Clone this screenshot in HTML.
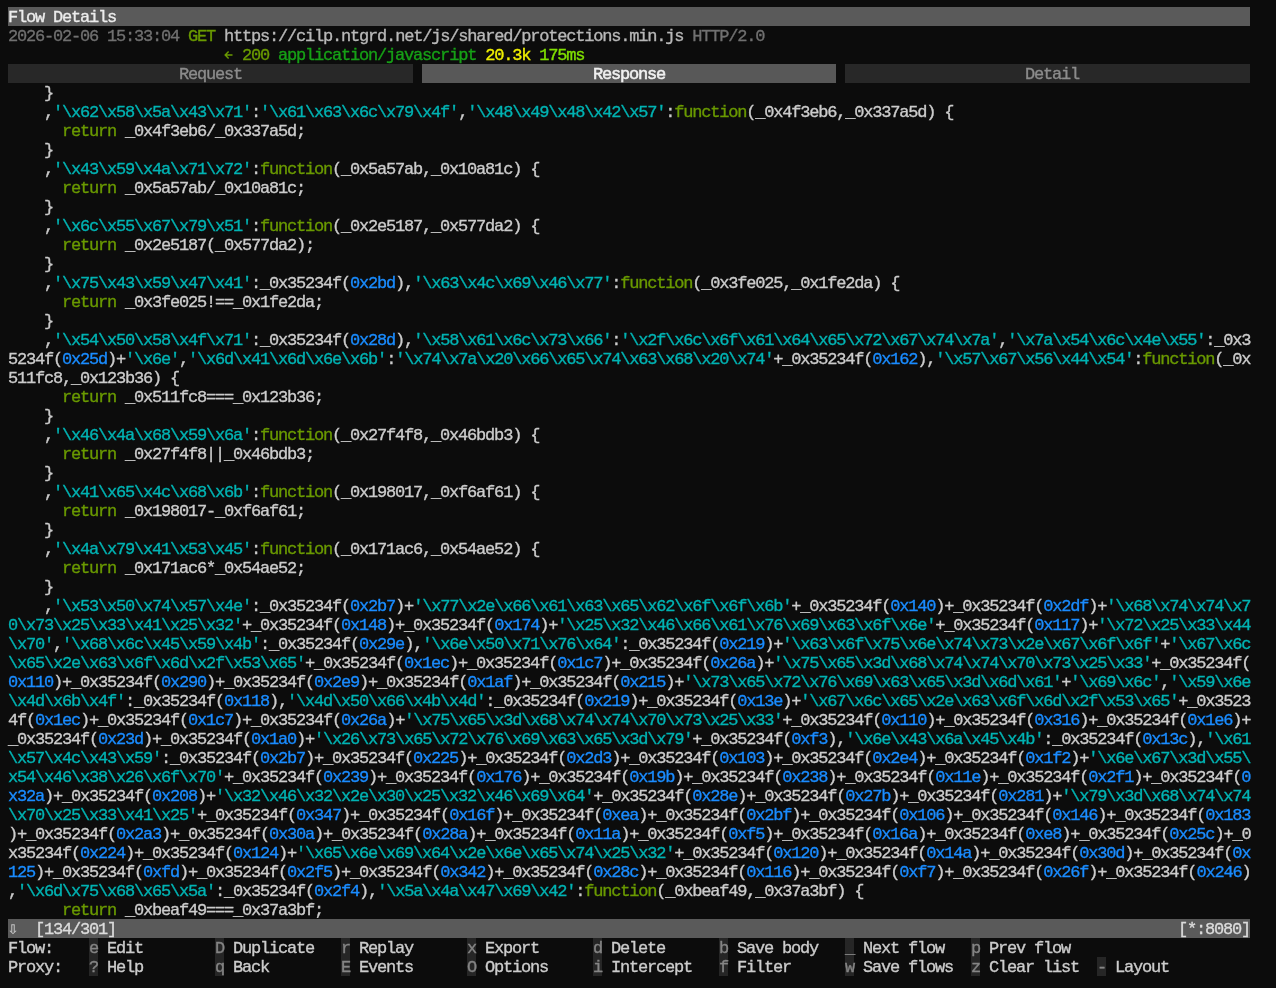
<!DOCTYPE html>
<html><head><meta charset="utf-8"><style>
html,body{margin:0;padding:0;background:#0c0c0c;width:1276px;height:988px;overflow:hidden;}
body{position:relative;}
.r{position:absolute;left:8px;height:19px;line-height:21px;white-space:pre;font-family:"Liberation Mono",monospace;font-size:17px;letter-spacing:-1.2px;color:#cccccc;-webkit-text-stroke:0.35px currentColor;will-change:transform;}
i{font-style:normal;}
.c{color:#00b3b3}.b{color:#1a8cff}.o{color:#6a9a00}
.bar{position:absolute;height:19px;background:#5a5a5a;}
.hd{color:#ececec}
.ts{color:#707070}.url{color:#b8b8b8}.g{color:#16a016}.y{color:#f0f000}.lg{color:#80e000}
.tabI{position:absolute;height:19px;background:#282828}
.tabA{position:absolute;height:19px;background:#585858}
.tI{color:#8c8c8c}.tA{color:#f0f0f0;-webkit-text-stroke:0.55px #f0f0f0}
.sa{color:#bdbdbd}.hd2{color:#dcdcdc}
.kb{position:absolute;width:9px;height:19px;background:#262626}
.k{color:#858585}
</style></head><body>
<div class="bar" style="top:7px;left:8px;width:1242px"></div>
<div class="r" style="top:7px"><i class="hd">Flow Details</i></div>
<div class="r" style="top:26px"><i class="ts">2026-02-06 15:33:04</i> <i class="o">GET</i> <i class="url">https://cilp.ntgrd.net/js/shared/protections.min.js</i> <i class="ts">HTTP/2.0</i></div>
<div class="r" style="top:45px">                         <svg style="position:absolute;left:216px;top:0px" width="9" height="19" viewBox="0 0 9 19"><path d="M8.5 10H1.5M4.6 6.6L1.2 10L4.6 13.4" fill="none" stroke="#6a9a00" stroke-width="1.45"/></svg> <i class="o">200</i> <i class="g">application/javascript</i> <i class="y">20.3k</i> <i class="lg">175ms</i></div>
<div class="tabI" style="top:64px;left:8px;width:405px"></div>
<div class="r tI" style="top:64px;left:179px">Request</div>
<div class="tabA" style="top:64px;left:422px;width:414px"></div>
<div class="r tA" style="top:64px;left:593px">Response</div>
<div class="tabI" style="top:64px;left:845px;width:405px"></div>
<div class="r tI" style="top:64px;left:1025px">Detail</div>
<div class="r" style="top:83px">    }</div>
<div class="r" style="top:102px">    ,<i class="c">&#x27;\x62\x58\x5a\x43\x71&#x27;</i>:<i class="c">&#x27;\x61\x63\x6c\x79\x4f&#x27;</i>,<i class="c">&#x27;\x48\x49\x48\x42\x57&#x27;</i>:<i class="o">function</i>(_0x4f3eb6,_0x337a5d) {</div>
<div class="r" style="top:121px">      <i class="o">return</i> _0x4f3eb6/_0x337a5d;</div>
<div class="r" style="top:140px">    }</div>
<div class="r" style="top:159px">    ,<i class="c">&#x27;\x43\x59\x4a\x71\x72&#x27;</i>:<i class="o">function</i>(_0x5a57ab,_0x10a81c) {</div>
<div class="r" style="top:178px">      <i class="o">return</i> _0x5a57ab/_0x10a81c;</div>
<div class="r" style="top:197px">    }</div>
<div class="r" style="top:216px">    ,<i class="c">&#x27;\x6c\x55\x67\x79\x51&#x27;</i>:<i class="o">function</i>(_0x2e5187,_0x577da2) {</div>
<div class="r" style="top:235px">      <i class="o">return</i> _0x2e5187(_0x577da2);</div>
<div class="r" style="top:254px">    }</div>
<div class="r" style="top:273px">    ,<i class="c">&#x27;\x75\x43\x59\x47\x41&#x27;</i>:_0x35234f(<i class="b">0x2bd</i>),<i class="c">&#x27;\x63\x4c\x69\x46\x77&#x27;</i>:<i class="o">function</i>(_0x3fe025,_0x1fe2da) {</div>
<div class="r" style="top:292px">      <i class="o">return</i> _0x3fe025!==_0x1fe2da;</div>
<div class="r" style="top:311px">    }</div>
<div class="r" style="top:330px">    ,<i class="c">&#x27;\x54\x50\x58\x4f\x71&#x27;</i>:_0x35234f(<i class="b">0x28d</i>),<i class="c">&#x27;\x58\x61\x6c\x73\x66&#x27;</i>:<i class="c">&#x27;\x2f\x6c\x6f\x61\x64\x65\x72\x67\x74\x7a&#x27;</i>,<i class="c">&#x27;\x7a\x54\x6c\x4e\x55&#x27;</i>:_0x3</div>
<div class="r" style="top:349px">5234f(<i class="b">0x25d</i>)+<i class="c">&#x27;\x6e&#x27;</i>,<i class="c">&#x27;\x6d\x41\x6d\x6e\x6b&#x27;</i>:<i class="c">&#x27;\x74\x7a\x20\x66\x65\x74\x63\x68\x20\x74&#x27;</i>+_0x35234f(<i class="b">0x162</i>),<i class="c">&#x27;\x57\x67\x56\x44\x54&#x27;</i>:<i class="o">function</i>(_0x</div>
<div class="r" style="top:368px">511fc8,_0x123b36) {</div>
<div class="r" style="top:387px">      <i class="o">return</i> _0x511fc8===_0x123b36;</div>
<div class="r" style="top:406px">    }</div>
<div class="r" style="top:425px">    ,<i class="c">&#x27;\x46\x4a\x68\x59\x6a&#x27;</i>:<i class="o">function</i>(_0x27f4f8,_0x46bdb3) {</div>
<div class="r" style="top:444px">      <i class="o">return</i> _0x27f4f8||_0x46bdb3;</div>
<div class="r" style="top:463px">    }</div>
<div class="r" style="top:482px">    ,<i class="c">&#x27;\x41\x65\x4c\x68\x6b&#x27;</i>:<i class="o">function</i>(_0x198017,_0xf6af61) {</div>
<div class="r" style="top:501px">      <i class="o">return</i> _0x198017-_0xf6af61;</div>
<div class="r" style="top:520px">    }</div>
<div class="r" style="top:539px">    ,<i class="c">&#x27;\x4a\x79\x41\x53\x45&#x27;</i>:<i class="o">function</i>(_0x171ac6,_0x54ae52) {</div>
<div class="r" style="top:558px">      <i class="o">return</i> _0x171ac6*_0x54ae52;</div>
<div class="r" style="top:577px">    }</div>
<div class="r" style="top:596px">    ,<i class="c">&#x27;\x53\x50\x74\x57\x4e&#x27;</i>:_0x35234f(<i class="b">0x2b7</i>)+<i class="c">&#x27;\x77\x2e\x66\x61\x63\x65\x62\x6f\x6f\x6b&#x27;</i>+_0x35234f(<i class="b">0x140</i>)+_0x35234f(<i class="b">0x2df</i>)+<i class="c">&#x27;\x68\x74\x74\x7</i></div>
<div class="r" style="top:615px"><i class="c">0\x73\x25\x33\x41\x25\x32&#x27;</i>+_0x35234f(<i class="b">0x148</i>)+_0x35234f(<i class="b">0x174</i>)+<i class="c">&#x27;\x25\x32\x46\x66\x61\x76\x69\x63\x6f\x6e&#x27;</i>+_0x35234f(<i class="b">0x117</i>)+<i class="c">&#x27;\x72\x25\x33\x44</i></div>
<div class="r" style="top:634px"><i class="c">\x70&#x27;</i>,<i class="c">&#x27;\x68\x6c\x45\x59\x4b&#x27;</i>:_0x35234f(<i class="b">0x29e</i>),<i class="c">&#x27;\x6e\x50\x71\x76\x64&#x27;</i>:_0x35234f(<i class="b">0x219</i>)+<i class="c">&#x27;\x63\x6f\x75\x6e\x74\x73\x2e\x67\x6f\x6f&#x27;</i>+<i class="c">&#x27;\x67\x6c</i></div>
<div class="r" style="top:653px"><i class="c">\x65\x2e\x63\x6f\x6d\x2f\x53\x65&#x27;</i>+_0x35234f(<i class="b">0x1ec</i>)+_0x35234f(<i class="b">0x1c7</i>)+_0x35234f(<i class="b">0x26a</i>)+<i class="c">&#x27;\x75\x65\x3d\x68\x74\x74\x70\x73\x25\x33&#x27;</i>+_0x35234f(</div>
<div class="r" style="top:672px"><i class="b">0x110</i>)+_0x35234f(<i class="b">0x290</i>)+_0x35234f(<i class="b">0x2e9</i>)+_0x35234f(<i class="b">0x1af</i>)+_0x35234f(<i class="b">0x215</i>)+<i class="c">&#x27;\x73\x65\x72\x76\x69\x63\x65\x3d\x6d\x61&#x27;</i>+<i class="c">&#x27;\x69\x6c&#x27;</i>,<i class="c">&#x27;\x59\x6e</i></div>
<div class="r" style="top:691px"><i class="c">\x4d\x6b\x4f&#x27;</i>:_0x35234f(<i class="b">0x118</i>),<i class="c">&#x27;\x4d\x50\x66\x4b\x4d&#x27;</i>:_0x35234f(<i class="b">0x219</i>)+_0x35234f(<i class="b">0x13e</i>)+<i class="c">&#x27;\x67\x6c\x65\x2e\x63\x6f\x6d\x2f\x53\x65&#x27;</i>+_0x3523</div>
<div class="r" style="top:710px">4f(<i class="b">0x1ec</i>)+_0x35234f(<i class="b">0x1c7</i>)+_0x35234f(<i class="b">0x26a</i>)+<i class="c">&#x27;\x75\x65\x3d\x68\x74\x74\x70\x73\x25\x33&#x27;</i>+_0x35234f(<i class="b">0x110</i>)+_0x35234f(<i class="b">0x316</i>)+_0x35234f(<i class="b">0x1e6</i>)+</div>
<div class="r" style="top:729px">_0x35234f(<i class="b">0x23d</i>)+_0x35234f(<i class="b">0x1a0</i>)+<i class="c">&#x27;\x26\x73\x65\x72\x76\x69\x63\x65\x3d\x79&#x27;</i>+_0x35234f(<i class="b">0xf3</i>),<i class="c">&#x27;\x6e\x43\x6a\x45\x4b&#x27;</i>:_0x35234f(<i class="b">0x13c</i>),<i class="c">&#x27;\x61</i></div>
<div class="r" style="top:748px"><i class="c">\x57\x4c\x43\x59&#x27;</i>:_0x35234f(<i class="b">0x2b7</i>)+_0x35234f(<i class="b">0x225</i>)+_0x35234f(<i class="b">0x2d3</i>)+_0x35234f(<i class="b">0x103</i>)+_0x35234f(<i class="b">0x2e4</i>)+_0x35234f(<i class="b">0x1f2</i>)+<i class="c">&#x27;\x6e\x67\x3d\x55\</i></div>
<div class="r" style="top:767px"><i class="c">x54\x46\x38\x26\x6f\x70&#x27;</i>+_0x35234f(<i class="b">0x239</i>)+_0x35234f(<i class="b">0x176</i>)+_0x35234f(<i class="b">0x19b</i>)+_0x35234f(<i class="b">0x238</i>)+_0x35234f(<i class="b">0x11e</i>)+_0x35234f(<i class="b">0x2f1</i>)+_0x35234f(<i class="b">0</i></div>
<div class="r" style="top:786px"><i class="b">x32a</i>)+_0x35234f(<i class="b">0x208</i>)+<i class="c">&#x27;\x32\x46\x32\x2e\x30\x25\x32\x46\x69\x64&#x27;</i>+_0x35234f(<i class="b">0x28e</i>)+_0x35234f(<i class="b">0x27b</i>)+_0x35234f(<i class="b">0x281</i>)+<i class="c">&#x27;\x79\x3d\x68\x74\x74</i></div>
<div class="r" style="top:805px"><i class="c">\x70\x25\x33\x41\x25&#x27;</i>+_0x35234f(<i class="b">0x347</i>)+_0x35234f(<i class="b">0x16f</i>)+_0x35234f(<i class="b">0xea</i>)+_0x35234f(<i class="b">0x2bf</i>)+_0x35234f(<i class="b">0x106</i>)+_0x35234f(<i class="b">0x146</i>)+_0x35234f(<i class="b">0x183</i></div>
<div class="r" style="top:824px">)+_0x35234f(<i class="b">0x2a3</i>)+_0x35234f(<i class="b">0x30a</i>)+_0x35234f(<i class="b">0x28a</i>)+_0x35234f(<i class="b">0x11a</i>)+_0x35234f(<i class="b">0xf5</i>)+_0x35234f(<i class="b">0x16a</i>)+_0x35234f(<i class="b">0xe8</i>)+_0x35234f(<i class="b">0x25c</i>)+_0</div>
<div class="r" style="top:843px">x35234f(<i class="b">0x224</i>)+_0x35234f(<i class="b">0x124</i>)+<i class="c">&#x27;\x65\x6e\x69\x64\x2e\x6e\x65\x74\x25\x32&#x27;</i>+_0x35234f(<i class="b">0x120</i>)+_0x35234f(<i class="b">0x14a</i>)+_0x35234f(<i class="b">0x30d</i>)+_0x35234f(<i class="b">0x</i></div>
<div class="r" style="top:862px"><i class="b">125</i>)+_0x35234f(<i class="b">0xfd</i>)+_0x35234f(<i class="b">0x2f5</i>)+_0x35234f(<i class="b">0x342</i>)+_0x35234f(<i class="b">0x28c</i>)+_0x35234f(<i class="b">0x116</i>)+_0x35234f(<i class="b">0xf7</i>)+_0x35234f(<i class="b">0x26f</i>)+_0x35234f(<i class="b">0x246</i>)</div>
<div class="r" style="top:881px">,<i class="c">&#x27;\x6d\x75\x68\x65\x5a&#x27;</i>:_0x35234f(<i class="b">0x2f4</i>),<i class="c">&#x27;\x5a\x4a\x47\x69\x42&#x27;</i>:<i class="o">function</i>(_0xbeaf49,_0x37a3bf) {</div>
<div class="r" style="top:900px">      <i class="o">return</i> _0xbeaf49===_0x37a3bf;</div>
<div class="bar" style="top:919px;left:8px;width:1242px"></div>
<div class="r" style="top:919px"><i class="sa">⇩</i>  <i class="hd2">[134/301]</i></div>
<div class="r hd2" style="top:919px;left:1178px">[*:8080]</div>
<div class="r" style="top:938px">Flow:</div>
<div class="kb" style="top:938px;left:89px"></div>
<div class="r" style="top:938px;left:89px"><i class="k">e</i> Edit</div>
<div class="kb" style="top:938px;left:215px"></div>
<div class="r" style="top:938px;left:215px"><i class="k">D</i> Duplicate</div>
<div class="kb" style="top:938px;left:341px"></div>
<div class="r" style="top:938px;left:341px"><i class="k">r</i> Replay</div>
<div class="kb" style="top:938px;left:467px"></div>
<div class="r" style="top:938px;left:467px"><i class="k">x</i> Export</div>
<div class="kb" style="top:938px;left:593px"></div>
<div class="r" style="top:938px;left:593px"><i class="k">d</i> Delete</div>
<div class="kb" style="top:938px;left:719px"></div>
<div class="r" style="top:938px;left:719px"><i class="k">b</i> Save body</div>
<div class="kb" style="top:938px;left:845px"></div>
<div class="r" style="top:938px;left:845px"><i class="k">_</i> Next flow</div>
<div class="kb" style="top:938px;left:971px"></div>
<div class="r" style="top:938px;left:971px"><i class="k">p</i> Prev flow</div>
<div class="r" style="top:957px">Proxy:</div>
<div class="kb" style="top:957px;left:89px"></div>
<div class="r" style="top:957px;left:89px"><i class="k">?</i> Help</div>
<div class="kb" style="top:957px;left:215px"></div>
<div class="r" style="top:957px;left:215px"><i class="k">q</i> Back</div>
<div class="kb" style="top:957px;left:341px"></div>
<div class="r" style="top:957px;left:341px"><i class="k">E</i> Events</div>
<div class="kb" style="top:957px;left:467px"></div>
<div class="r" style="top:957px;left:467px"><i class="k">O</i> Options</div>
<div class="kb" style="top:957px;left:593px"></div>
<div class="r" style="top:957px;left:593px"><i class="k">i</i> Intercept</div>
<div class="kb" style="top:957px;left:719px"></div>
<div class="r" style="top:957px;left:719px"><i class="k">f</i> Filter</div>
<div class="kb" style="top:957px;left:845px"></div>
<div class="r" style="top:957px;left:845px"><i class="k">w</i> Save flows</div>
<div class="kb" style="top:957px;left:971px"></div>
<div class="r" style="top:957px;left:971px"><i class="k">z</i> Clear list</div>
<div class="kb" style="top:957px;left:1097px"></div>
<div class="r" style="top:957px;left:1097px"><i class="k">-</i> Layout</div>
</body></html>
